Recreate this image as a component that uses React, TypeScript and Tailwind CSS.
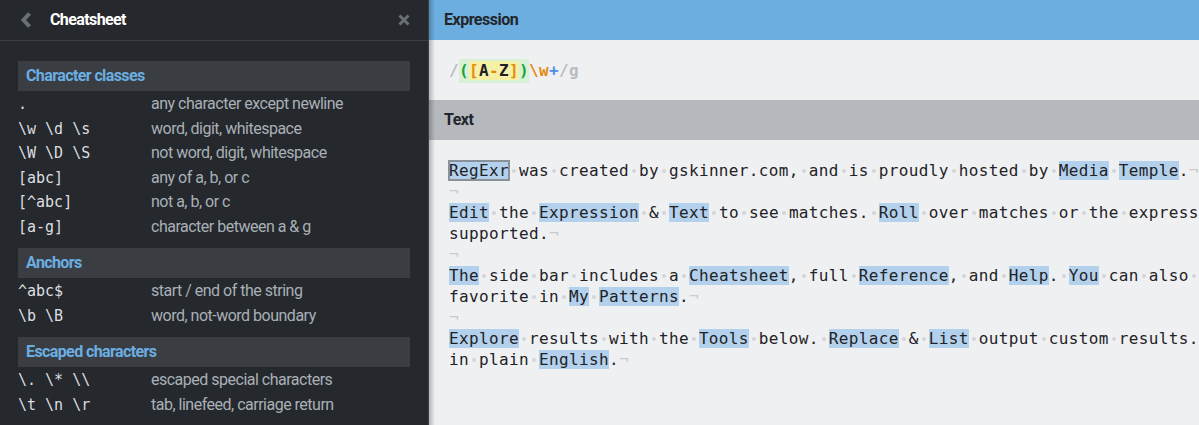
import React from 'react';

const sans = "font-['Roboto',sans-serif]";
const mono = "font-['DejaVu_Sans_Mono',monospace]";

type Row = { code: string; desc: string };

const sections: { title: string; rows: Row[] }[] = [
  {
    title: 'Character classes',
    rows: [
      { code: '.', desc: 'any character except newline' },
      { code: '\\w \\d \\s', desc: 'word, digit, whitespace' },
      { code: '\\W \\D \\S', desc: 'not word, digit, whitespace' },
      { code: '[abc]', desc: 'any of a, b, or c' },
      { code: '[^abc]', desc: 'not a, b, or c' },
      { code: '[a-g]', desc: 'character between a & g' },
    ],
  },
  {
    title: 'Anchors',
    rows: [
      { code: '^abc$', desc: 'start / end of the string' },
      { code: '\\b \\B', desc: 'word, not-word boundary' },
    ],
  },
  {
    title: 'Escaped characters',
    rows: [
      { code: '\\. \\* \\\\', desc: 'escaped special characters' },
      { code: '\\t \\n \\r', desc: 'tab, linefeed, carriage return' },
    ],
  },
];

// each entry is one visual line; br marks a line break (¬)
const textLines: { text: string; br: boolean }[] = [
  { text: 'RegExr was created by gskinner.com, and is proudly hosted by Media Temple.', br: true },
  { text: '', br: true },
  { text: 'Edit the Expression & Text to see matches. Roll over matches or the expression for details. PCRE & JavaScript flavors of RegEx are', br: false },
  { text: 'supported.', br: true },
  { text: '', br: true },
  { text: 'The side bar includes a Cheatsheet, full Reference, and Help. You can also Save & Share with the Community, and view patterns you create or', br: false },
  { text: 'favorite in My Patterns.', br: true },
  { text: '', br: true },
  { text: 'Explore results with the Tools below. Replace & List output custom results. Details lists capture groups. Explain describes your expression', br: false },
  { text: 'in plain English.', br: true },
];

const Line = ({ text, br, first }: { text: string; br: boolean; first: boolean }) => {
  const parts = text.split(/([A-Z]\w+| )/).filter((p) => p !== '');
  let firstMatch = first;
  return (
    <div className="h-[21px] leading-[21px] whitespace-pre">
      {parts.map((p, i) => {
        if (p === ' ')
          return (
            <span key={i} className="relative">
              {' '}
              <span className="absolute left-[3px] top-[8px] h-[4px] w-[4px] rounded-full bg-[#d3d5d8]" />
            </span>
          );
        if (/^[A-Z]\w+$/.test(p)) {
          const sel = firstMatch;
          firstMatch = false;
          return (
            <span
              key={i}
              className={
                sel
                  ? 'bg-[#b3d1ec] outline-2 outline-[#8a9199] -outline-offset-1'
                  : 'bg-[#b3d1ec]'
              }
            >
              {p}
            </span>
          );
        }
        return <span key={i}>{p}</span>;
      })}
      {br && <span className="text-[#c9cbce]">¬</span>}
    </div>
  );
};

export default function App() {
  return (
    <div className="flex h-[425px] w-[1199px] overflow-hidden bg-[#eff0f2]">
      {/* sidebar */}
      <div className={`flex w-[429px] shrink-0 flex-col border-r border-[#3b3f44] bg-[#25282c] ${sans}`}>
        <div className="flex h-[41px] shrink-0 items-center border-b border-[#3a3d41] pl-[20px] pr-[18px]">
          <svg width="12" height="16" viewBox="0 0 12 16" className="mr-[18px]">
            <path d="M9.5 1.5 L3.5 8 L9.5 14.5" fill="none" stroke="#6b7075" strokeWidth="4" strokeLinejoin="miter" />
          </svg>
          <span className="text-[16px] font-bold tracking-[-0.6px] text-white">Cheatsheet</span>
          <svg width="12" height="12" viewBox="0 0 12 12" className="ml-auto">
            <path d="M1.5 1.5 L10.5 10.5 M10.5 1.5 L1.5 10.5" stroke="#6b7075" strokeWidth="3" />
          </svg>
        </div>
        <div className="px-[18px] pt-[20px]">
          {sections.map((s, si) => (
            <div key={s.title} className={si > 0 ? 'mt-[10px]' : ''}>
              <div className="flex h-[30px] items-center bg-[#3a3e43] px-[8px] text-[16px] font-bold tracking-[-0.6px] text-[#6aaee2]">
                {s.title}
              </div>
              {s.rows.map((r) => (
                <div key={r.code} className="flex h-[24.5px] items-center pt-[2px]">
                  <span className={`w-[133px] whitespace-pre text-[15px] text-[#dcdee0] ${mono}`}>{r.code}</span>
                  <span className="text-[16px] tracking-[-0.5px] text-[#a9b0b7]">{r.desc}</span>
                </div>
              ))}
            </div>
          ))}
        </div>
      </div>

      {/* main */}
      <div className="relative flex min-w-0 flex-1 flex-col">
        <div className="pointer-events-none absolute inset-y-0 left-0 w-[6px] bg-gradient-to-r from-black/25 to-transparent" />
        <div className={`flex h-[40px] shrink-0 items-center bg-[#6daee0] px-[15px] text-[16px] font-bold tracking-[-0.5px] text-[#22262a] ${sans}`}>
          Expression
        </div>
        <div className={`flex h-[60px] shrink-0 items-center px-[20px] pt-[2px] text-[16px] font-bold tracking-[0.36px] ${mono}`}>
          <span className="text-[#b9bcc0]">/</span>
          <span className="bg-[#d7f0d6]">
            <span className="text-[#21a035]">(</span>
            <span className="bg-[#f6f0a6]">
              <span className="text-[#e48a0e]">[</span>
              <span className="text-[#1d2024]">A</span>
              <span className="text-[#e48a0e]">-</span>
              <span className="text-[#1d2024]">Z</span>
              <span className="text-[#e48a0e]">]</span>
            </span>
            <span className="text-[#21a035]">)</span>
          </span>
          <span className="text-[#e48a0e]">\w</span>
          <span className="text-[#4c8fe8]">+</span>
          <span className="text-[#b9bcc0]">/g</span>
        </div>
        <div className={`flex h-[40px] shrink-0 items-center bg-[#b5b9bd] px-[15px] text-[16px] font-bold tracking-[-0.5px] text-[#22262a] ${sans}`}>
          Text
        </div>
        <div className={`overflow-hidden pl-[20px] pt-[20px] text-[16px] tracking-[0.36px] text-[#1f2226] ${mono}`}>
          {textLines.map((l, i) => (
            <Line key={i} text={l.text} br={l.br} first={i === 0} />
          ))}
        </div>
      </div>
    </div>
  );
}
